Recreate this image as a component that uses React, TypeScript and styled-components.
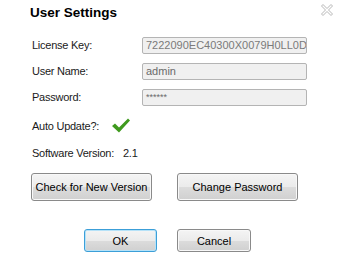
import React from "react";
import styled, { createGlobalStyle } from "styled-components";

const Global = createGlobalStyle`
  html, body { margin: 0; padding: 0; background: #ffffff; }
  body { font-family: "Liberation Sans", Arial, sans-serif; }
`;

const Dialog = styled.div`
  width: 340px;
  height: 263px;
  background: #ffffff;
  position: relative;
  box-sizing: border-box;
  color: #1a1a1a;
`;

const Header = styled.div`
  display: flex;
  justify-content: space-between;
  align-items: flex-start;
  height: 37px;
  box-sizing: border-box;
  padding: 4px 6px 0 30px;
`;

const Title = styled.div`
  font-size: 13.5px;
  font-weight: bold;
  line-height: 18px;
  color: #000;
`;

const Close = styled.div`
  width: 14px;
  height: 14px;
  margin-top: -1px;
`;

const Form = styled.div`
  display: grid;
  grid-template-columns: 110px 165px;
  grid-auto-rows: 17px;
  row-gap: 9px;
  padding-left: 32px;
`;

const Label = styled.div`
  font-size: 11px;
  letter-spacing: -0.25px;
  line-height: 17px;
  color: #1a1a1a;
`;

const Input = styled.div<{ $tone: string }>`
  box-sizing: border-box;
  height: 17px;
  border: 1px solid #b4b4b4;
  border-radius: 2px;
  background: #f0f0f0;
  font-size: 11px;
  line-height: 15px;
  padding-left: 3px;
  color: ${(p) => p.$tone};
  white-space: nowrap;
  overflow: hidden;
`;

const Stars = styled.span`
  font-size: 9px;
  vertical-align: 1px;
`;

const CheckRow = styled.div`
  display: flex;
  align-items: center;
  padding-left: 32px;
  margin-top: 10px;
  height: 20px;
`;

const CheckLabel = styled.span`
  font-size: 11px;
  letter-spacing: -0.25px;
  width: 79px;
`;

const VersionRow = styled.div`
  display: flex;
  padding-left: 32px;
  margin-top: 10px;
  font-size: 11px;
  letter-spacing: -0.25px;
  line-height: 14px;
`;

const VersionLabel = styled.span`
  width: 91px;
`;

const ButtonRow = styled.div<{ $top: number; $left: number; $gap: number }>`
  display: flex;
  gap: ${(p) => p.$gap}px;
  margin-top: ${(p) => p.$top}px;
  padding-left: ${(p) => p.$left}px;
`;

const Button = styled.div<{ $w: number; $h: number; $focus?: boolean }>`
  box-sizing: border-box;
  width: ${(p) => p.$w}px;
  height: ${(p) => p.$h}px;
  border: 1px solid ${(p) => (p.$focus ? "#3c9fd8" : "#8a8a8a")};
  border-radius: 3px;
  background: linear-gradient(#f4f4f4 0%, #ebebeb 50%, #dcdcdc 51%, #d0d0d0 100%);
  box-shadow: inset 0 0 0 1px ${(p) => (p.$focus ? "#b6e2f8" : "#f8f8f8")};
  display: flex;
  align-items: center;
  justify-content: center;
  font-size: 11px;
  color: #000;
`;

export default function App() {
  return (
    <>
      <Global />
      <Dialog>
        <Header>
          <Title>User Settings</Title>
          <Close>
            <svg width="14" height="14" viewBox="0 0 14 14">
              <path
                d="M1.5 3 L3 1.5 L7 5.5 L11 1.5 L12.5 3 L8.5 7 L12.5 11 L11 12.5 L7 8.5 L3 12.5 L1.5 11 L5.5 7 Z"
                fill="#ffffff"
                stroke="#b8b8b8"
                strokeWidth="1"
              />
            </svg>
          </Close>
        </Header>
        <Form>
          <Label>License Key:</Label>
          <Input $tone="#7a7a7a">7222090EC40300X0079H0LL0D</Input>
          <Label>User Name:</Label>
          <Input $tone="#6a6a6a">admin</Input>
          <Label>Password:</Label>
          <Input $tone="#6a6a6a">
            <Stars>******</Stars>
          </Input>
        </Form>
        <CheckRow>
          <CheckLabel>Auto Update?:</CheckLabel>
          <svg width="20" height="18" viewBox="0 0 20 18">
            <path
              d="M1 9 L4 6.5 L8 10.5 L17 1.5 L19 3.5 L8 15.5 Z"
              fill="#3f9a1e"
            />
          </svg>
        </CheckRow>
        <VersionRow>
          <VersionLabel>Software Version:</VersionLabel>
          <span>2.1</span>
        </VersionRow>
        <ButtonRow $top={13} $left={31} $gap={25}>
          <Button $w={121} $h={28}>Check for New Version</Button>
          <Button $w={121} $h={28}>Change Password</Button>
        </ButtonRow>
        <ButtonRow $top={28} $left={84} $gap={20}>
          <Button $w={73} $h={23} $focus>OK</Button>
          <Button $w={74} $h={23}>Cancel</Button>
        </ButtonRow>
      </Dialog>
    </>
  );
}
